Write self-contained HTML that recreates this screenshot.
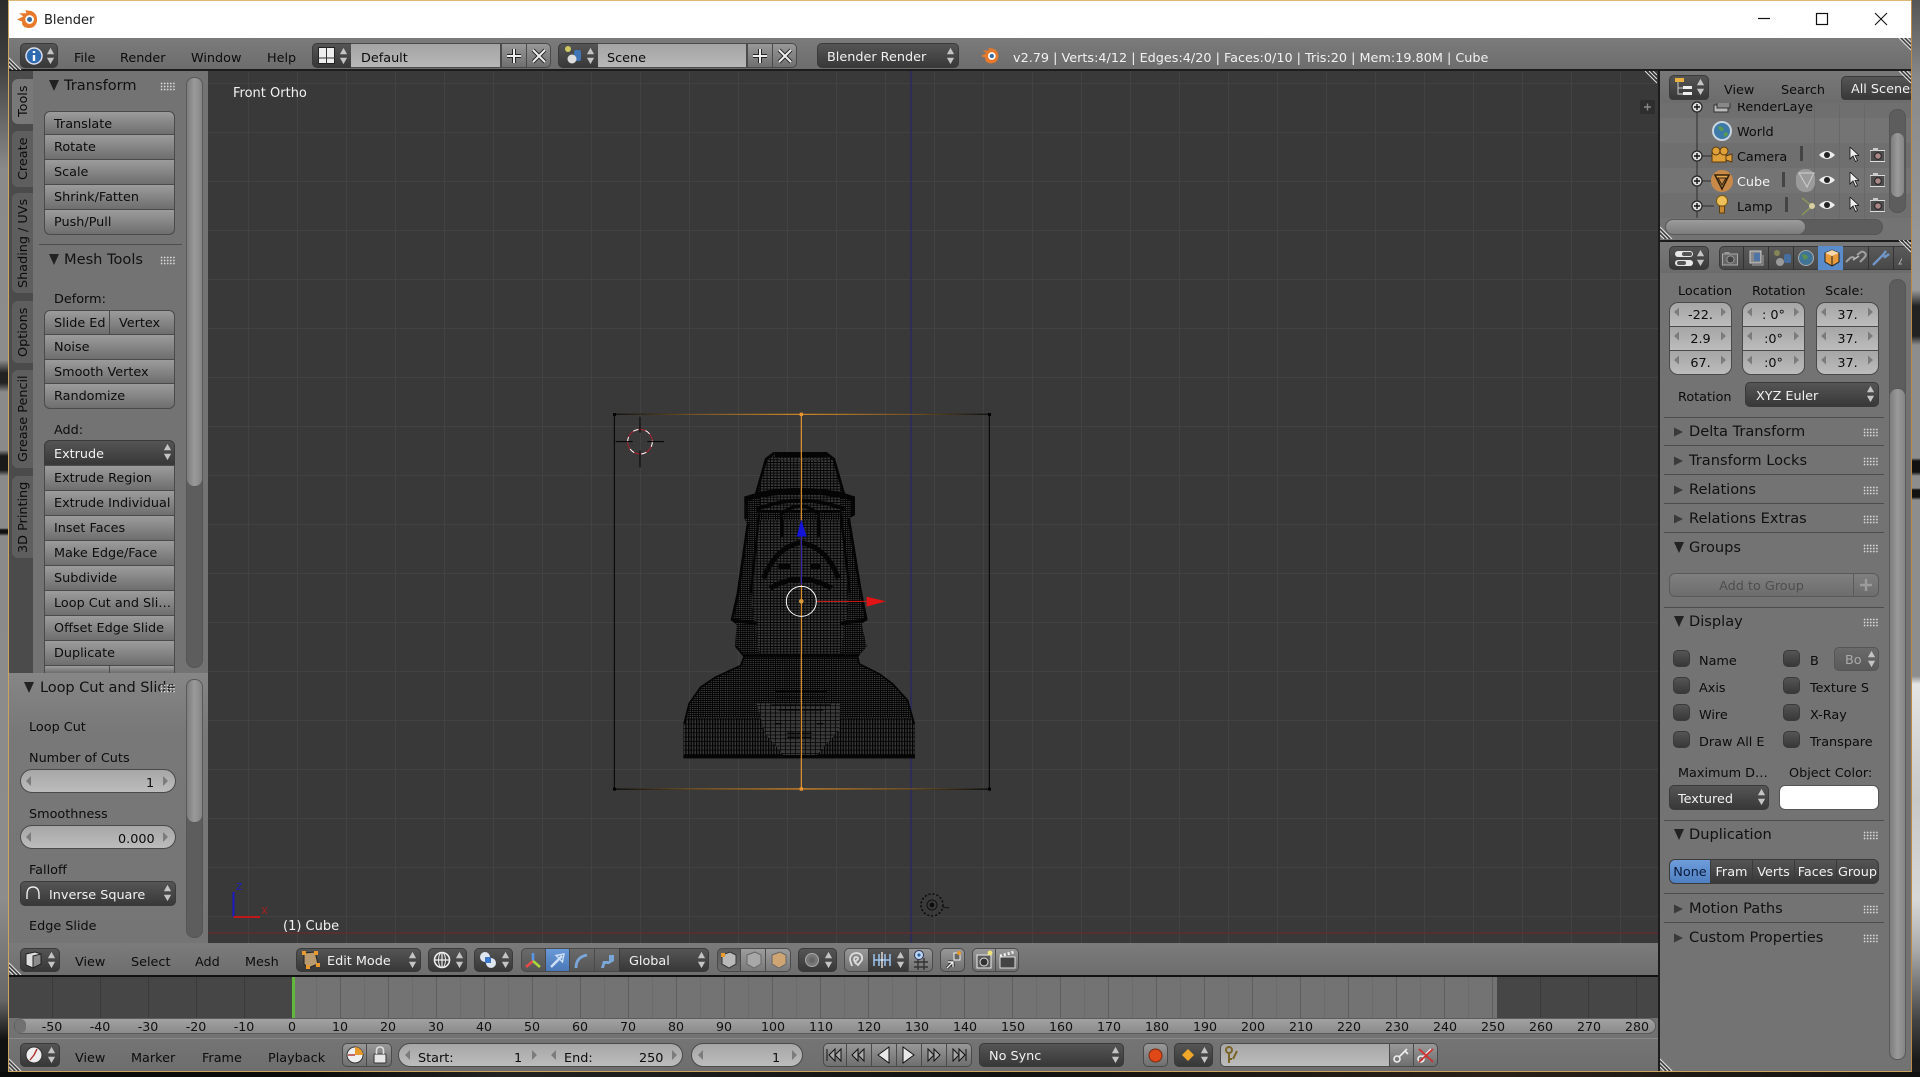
<!DOCTYPE html>
<html lang="en"><head><meta charset="utf-8"><title>Blender</title>
<style>
html,body{margin:0;padding:0;width:1920px;height:1077px;overflow:hidden;background:#111}
body{position:relative;font-family:"DejaVu Sans","Liberation Sans",sans-serif;font-size:12.8px;color:#0c0c0c}
div,svg{position:absolute;box-sizing:border-box}
.t{white-space:nowrap;line-height:16px;height:16px;margin-top:1.5px}
.w{color:#f2f2f2}
.h{font-size:14.6px;color:#111;line-height:18px;height:18px;white-space:nowrap}
.b{background:linear-gradient(#9c9c9c,#6e6e6e);border:1px solid #4a4a4a;margin-top:0;line-height:26px;padding-left:9px;white-space:nowrap;overflow:hidden}
.d{background:linear-gradient(#555,#383838);border:1px solid #3a3a3a;border-radius:5px;color:#f2f2f2;white-space:nowrap;line-height:27px}
.l{background:linear-gradient(#989898,#6f6f6f);border:1px solid #4a4a4a}
.f{background:linear-gradient(#a6a6a6,#bcbcbc);border:1px solid #4a4a4a}
.g{width:15px;height:9px;background:radial-gradient(circle,#dcdcdc .7px,rgba(0,0,0,0) 1px) 0 0/3.1px 3px}
.sep{height:1px;background:#4d4d4d}
.sb{background:#5d5d5d;border:1px solid #555;border-radius:8px}
.th{background:linear-gradient(90deg,#7d7d7d,#9a9a9a,#858585);border:1px solid #5a5a5a;border-radius:8px}
.tab{left:12px;width:21px;background:#5e5e5e;border-radius:6px 0 0 6px}
.tab span{position:absolute;left:3px;top:0;width:18px;height:100%;writing-mode:vertical-rl;transform:rotate(180deg);text-align:center;line-height:18px;white-space:nowrap;color:#0c0c0c;font-size:12.8px}
</style></head><body>
<svg width="0" height="0" style="left:0;top:0"><defs>
<symbol id="ud" viewBox="0 0 10 20"><path d="M5 1L9 8H1ZM5 19L9 12H1Z" fill="#c4c4c4"/></symbol>
<symbol id="ra" viewBox="0 0 6 10"><path d="M1 0L6 5L1 10Z" fill="#7c7c7c"/></symbol>
<symbol id="la" viewBox="0 0 6 10"><path d="M5 0L0 5L5 10Z" fill="#7c7c7c"/></symbol>
<symbol id="td" viewBox="0 0 10 11"><path d="M0 0H10L5 11Z" fill="#222"/></symbol>
<symbol id="tr" viewBox="0 0 10 10"><path d="M0 0L10 5L0 10Z" fill="#3a3a3a"/></symbol>
<symbol id="hc" viewBox="0 0 14 14"><path d="M0 2L12 14M0 6L8 14M0 10L4 14" stroke="#ddd" stroke-width="1.1" fill="none"/><path d="M0 4L10 14M0 8L6 14" stroke="#333" stroke-width="1" fill="none"/></symbol>
<symbol id="hr" viewBox="0 0 14 14"><path d="M2 0L14 12M6 0L14 8M10 0L14 4" stroke="#ddd" stroke-width="1.1" fill="none"/><path d="M4 0L14 10M8 0L14 6" stroke="#333" stroke-width="1" fill="none"/></symbol>
<symbol id="eye" viewBox="0 0 16 10"><path d="M0 5Q8 -3 16 5Q8 13 0 5Z" fill="#eee"/><circle cx="8" cy="5" r="3" fill="#222"/></symbol>
<symbol id="cur" viewBox="0 0 10 15"><path d="M1 0V12L4 9L6.5 14.5L8.5 13.5L6 8.5H10Z" fill="#eee" stroke="#111" stroke-width=".8"/></symbol>
<symbol id="cam" viewBox="0 0 15 14"><rect x="0" y="2.5" width="15" height="11" fill="#4d4d4d" stroke="#ddd" stroke-width="1"/><rect x="3" y="0" width="5" height="3" fill="#ccc"/><circle cx="8" cy="8" r="3.3" fill="#a88" stroke="#222"/></symbol>
<symbol id="pl" viewBox="0 0 14 14"><circle cx="7" cy="7" r="5" fill="#ddd" stroke="#222" stroke-width="1.2"/><path d="M4 7H10M7 4V10" stroke="#111" stroke-width="1.4"/></symbol>
<pattern id="m1" width="7" height="6" patternUnits="userSpaceOnUse"><rect width="7" height="6" fill="#3a3a3a"/><path d="M1 0V6M0 1H7" stroke="#000" stroke-width="3.2"/></pattern>
<pattern id="m2" width="10" height="8" patternUnits="userSpaceOnUse"><rect width="10" height="8" fill="#3a3a3a"/><path d="M1 0V8M0 1H10" stroke="#000" stroke-width="3"/></pattern>
<pattern id="m4" width="8" height="13" patternUnits="userSpaceOnUse"><rect width="8" height="13" fill="#363636"/><path d="M1.5 0V13" stroke="#000" stroke-width="4"/><path d="M0 1H8" stroke="#000" stroke-width="2.4"/></pattern>
<pattern id="m5" width="15" height="11" patternUnits="userSpaceOnUse"><rect width="15" height="11" fill="#3a3a3a"/><path d="M1 0V11M0 1H15" stroke="#000" stroke-width="2.2"/></pattern>
<linearGradient id="og" gradientUnits="userSpaceOnUse" x1="43" y1="0" x2="1168" y2="0"><stop offset="0" stop-color="#111"/><stop offset=".2" stop-color="#7a5a28"/><stop offset=".5" stop-color="#e8952e"/><stop offset=".8" stop-color="#7a5a28"/><stop offset="1" stop-color="#111"/></linearGradient>
<clipPath id="sil"><path d="M520 186L495 205L485 240L465 310L433 320L433 385L440 400L410 610L392 690L410 705L405 770L430 800L420 825L345 860L300 890L265 940L250 1000V1105H945V1000L925 930L880 880L840 850L780 820L775 800L800 770L785 700L803 690L785 600L750 385L765 375V320L735 310L712 230L705 205L680 186Z"/></clipPath>
</defs></svg>

<!-- desktop behind -->
<div style="left:0;top:0;width:9px;height:1077px;background:linear-gradient(#2b2b2b 0,#3d3d3d 60px,#8a8a8a 170px,#8c8c8c 360px,#222 373px,#222 383px,#8a8a8a 392px,#8a8a8a 450px,#1a1a1a 456px,#1a1a1a 470px,#8a8a8a 476px,#8a8a8a 528px,#111 530px,#111 533px,#8a8a8a 536px,#8c8c8c 900px,#666 1000px,#111 1040px)"></div>
<div style="left:1911px;top:0;width:9px;height:1077px;background:linear-gradient(#555 0,#8a8a8a 80px,#9a9a9a 290px,#222 306px,#222 336px,#8d8d8d 345px,#8d8d8d 458px,#111 461px,#111 472px,#8d8d8d 476px,#8d8d8d 488px,#111 490px,#111 497px,#8d8d8d 500px,#8d8d8d 676px,#e4e4e4 684px,#c8c8c8 800px,#d8d8d8 900px,#aaa 950px,#444 1020px,#1a1a1a 1060px)"></div>
<div style="left:0;top:1072px;width:1920px;height:5px;background:linear-gradient(90deg,#0a0a0a,#0a0a0a 300px,#222 500px,#111 1000px,#2a2018 1500px,#111)"></div>

<!-- window -->
<div style="left:8px;top:0;width:1904px;height:1072px;background:#727272;border:1px solid #c9a560;border-top:1px solid #d9b673"></div>
<div style="left:9px;top:1px;width:1902px;height:37px;background:#fff"></div>
<svg style="left:16px;top:8px" width="23" height="23" viewBox="0 0 22 22"><path d="M1 11L7 8L3 5L10 5L9 2L15 3Q21 6 20 13Q18 20 11 19Q5 18 6 13Z" fill="#e8792b"/><circle cx="13" cy="11" r="4.2" fill="#fff"/><circle cx="13" cy="11" r="2.4" fill="#3b6ea5"/></svg>
<div class="t" style="left:44px;top:11px;color:#1c1c1c;font-size:13px">Blender</div>
<svg style="left:1750px;top:8px" width="140" height="24"><path d="M8 10.5H20" stroke="#111" stroke-width="1.2"/><rect x="66.5" y="5.5" width="11" height="11" fill="none" stroke="#111" stroke-width="1.2"/><path d="M125 5L137 17M137 5L125 17" stroke="#111" stroke-width="1.1"/></svg>

<!-- top header -->
<div style="left:9px;top:38px;width:1902px;height:33px;background:linear-gradient(#7b7b7b,#6d6d6d);border-bottom:2px solid #1c1c1c"></div>
<svg style="left:9px;top:56px" width="14" height="14"><use href="#hc"/></svg>
<svg style="left:1897px;top:38px" width="14" height="14"><use href="#hr"/></svg>
<div class="d" style="left:20px;top:43px;width:38px;height:25px"></div>
<svg style="left:25px;top:47px" width="18" height="18" viewBox="0 0 18 18"><circle cx="9" cy="9" r="8" fill="#2e6ab0" stroke="#dde" stroke-width="1.5"/><path d="M9 4V6M9 8V14" stroke="#fff" stroke-width="2.4"/></svg>
<svg style="left:46px;top:47px" width="9" height="18"><use href="#ud"/></svg>
<div class="t" style="left:74px;top:49px">File</div>
<div class="t" style="left:120px;top:49px">Render</div>
<div class="t" style="left:191px;top:49px">Window</div>
<div class="t" style="left:267px;top:49px">Help</div>
<div class="d" style="left:312px;top:43px;width:42px;height:25px;border-radius:5px 0 0 5px"></div>
<svg style="left:318px;top:47px" width="17" height="17"><rect x=".5" y=".5" width="16" height="16" fill="#eee" stroke="#222"/><path d="M8.5 0V17M0 11H17" stroke="#333"/></svg>
<svg style="left:339px;top:47px" width="9" height="18"><use href="#ud"/></svg>
<div class="f" style="left:351px;top:43px;width:150px;height:25px;background:linear-gradient(#a4a4a4,#b7b7b7);border-left:0"></div>
<div class="t" style="left:361px;top:49px">Default</div>
<div class="l" style="left:501px;top:43px;width:26px;height:25px"></div>
<div class="l" style="left:526px;top:43px;width:25px;height:25px;border-radius:0 5px 5px 0"></div>
<svg style="left:505px;top:47px" width="44" height="18"><path d="M9 2V16M2 9H16" stroke="#222" stroke-width="4"/><path d="M9 2V16M2 9H16" stroke="#eee" stroke-width="2"/><path d="M28 3L40 15M40 3L28 15" stroke="#222" stroke-width="4"/><path d="M28 3L40 15M40 3L28 15" stroke="#eee" stroke-width="2"/></svg>
<div class="d" style="left:558px;top:43px;width:42px;height:25px;border-radius:5px 0 0 5px"></div>
<svg style="left:563px;top:45px" width="20" height="20"><circle cx="5" cy="4" r="3" fill="#cfc860"/><rect x="11" y="5" width="7" height="11" rx="2" fill="#3f74b5"/><circle cx="9" cy="14" r="4.5" fill="#ddd"/></svg>
<svg style="left:586px;top:47px" width="9" height="18"><use href="#ud"/></svg>
<div class="f" style="left:598px;top:43px;width:149px;height:25px;background:linear-gradient(#a4a4a4,#b7b7b7);border-left:0"></div>
<div class="t" style="left:607px;top:49px">Scene</div>
<div class="l" style="left:747px;top:43px;width:26px;height:25px"></div>
<div class="l" style="left:772px;top:43px;width:25px;height:25px;border-radius:0 5px 5px 0"></div>
<svg style="left:751px;top:47px" width="44" height="18"><path d="M9 2V16M2 9H16" stroke="#222" stroke-width="4"/><path d="M9 2V16M2 9H16" stroke="#eee" stroke-width="2"/><path d="M28 3L40 15M40 3L28 15" stroke="#222" stroke-width="4"/><path d="M28 3L40 15M40 3L28 15" stroke="#eee" stroke-width="2"/></svg>
<div class="d" style="left:817px;top:43px;width:142px;height:25px;padding-left:9px">Blender Render</div>
<svg style="left:946px;top:47px" width="9" height="18"><use href="#ud"/></svg>
<svg style="left:980px;top:46px" width="20" height="20" viewBox="0 0 22 22"><path d="M1 11L7 8L3 5L10 5L9 2L15 3Q21 6 20 13Q18 20 11 19Q5 18 6 13Z" fill="#e8792b"/><circle cx="13" cy="11" r="4.2" fill="#fff"/><circle cx="13" cy="11" r="2.4" fill="#3b6ea5"/></svg>
<div class="t w" style="left:1013px;top:49px">v2.79 | Verts:4/12 | Edges:4/20 | Faces:0/10 | Tris:20 | Mem:19.80M | Cube</div>

<!-- left tab strip + tools -->
<div style="left:9px;top:71px;width:24px;height:602px;background:#4b4b4b"></div>
<div class="tab" style="top:79px;height:45px;background:#787878"><span>Tools</span></div>
<div class="tab" style="top:131px;height:56px"><span>Create</span></div>
<div class="tab" style="top:193px;height:100px"><span>Shading / UVs</span></div>
<div class="tab" style="top:301px;height:62px"><span>Options</span></div>
<div class="tab" style="top:370px;height:98px"><span>Grease Pencil</span></div>
<div class="tab" style="top:476px;height:82px"><span>3D Printing</span></div>
<div style="left:33px;top:71px;width:175px;height:602px;background:#737373"></div>
<div class="sb" style="left:186px;top:77px;width:17px;height:591px"></div>
<div class="th" style="left:186px;top:77px;width:17px;height:410px"></div>

<svg style="left:49px;top:80px" width="10" height="11"><use href="#td"/></svg>
<div class="h" style="left:64px;top:77px">Transform</div>
<div class="g" style="left:160px;top:82px"></div>
<div class="b" style="left:44px;top:111px;width:131px;height:24px;border-radius:6px 6px 0 0">Translate</div>
<div class="b" style="left:44px;top:134px;width:131px;height:26px">Rotate</div>
<div class="b" style="left:44px;top:159px;width:131px;height:26px">Scale</div>
<div class="b" style="left:44px;top:184px;width:131px;height:26px">Shrink/Fatten</div>
<div class="b" style="left:44px;top:209px;width:131px;height:26px;border-radius:0 0 6px 6px">Push/Pull</div>
<div class="sep" style="left:39px;top:244px;width:143px"></div>
<svg style="left:49px;top:254px" width="10" height="11"><use href="#td"/></svg>
<div class="h" style="left:64px;top:251px">Mesh Tools</div>
<div class="g" style="left:160px;top:256px"></div>
<div class="t" style="left:54px;top:290px">Deform:</div>
<div class="b" style="left:44px;top:310px;width:66px;height:25px;border-radius:6px 0 0 0">Slide Ed</div>
<div class="b" style="left:109px;top:310px;width:66px;height:25px;border-radius:0 6px 0 0">Vertex</div>
<div class="b" style="left:44px;top:334px;width:131px;height:26px">Noise</div>
<div class="b" style="left:44px;top:359px;width:131px;height:25px">Smooth Vertex</div>
<div class="b" style="left:44px;top:383px;width:131px;height:26px;border-radius:0 0 6px 6px">Randomize</div>
<div class="t" style="left:54px;top:421px">Add:</div>
<div class="d" style="left:44px;top:440px;width:131px;height:25px;padding-left:9px;border-radius:6px 6px 0 0">Extrude</div>
<svg style="left:163px;top:443px" width="9" height="18"><use href="#ud"/></svg>
<div class="b" style="left:44px;top:465px;width:131px;height:26px">Extrude Region</div>
<div class="b" style="left:44px;top:490px;width:131px;height:26px">Extrude Individual</div>
<div class="b" style="left:44px;top:515px;width:131px;height:26px">Inset Faces</div>
<div class="b" style="left:44px;top:540px;width:131px;height:26px">Make Edge/Face</div>
<div class="b" style="left:44px;top:565px;width:131px;height:26px">Subdivide</div>
<div class="b" style="left:44px;top:590px;width:131px;height:26px">Loop Cut and Sli…</div>
<div class="b" style="left:44px;top:615px;width:131px;height:26px">Offset Edge Slide</div>
<div class="b" style="left:44px;top:640px;width:131px;height:26px">Duplicate</div>
<div class="b" style="left:44px;top:665px;width:66px;height:8px;border-bottom:0"></div>
<div class="b" style="left:109px;top:665px;width:66px;height:8px;border-bottom:0"></div>

<!-- operator panel -->
<div style="left:9px;top:673px;width:199px;height:270px;background:linear-gradient(#868686,#787878 60px,#757575)"></div>
<div class="sb" style="left:186px;top:679px;width:17px;height:259px"></div>
<div class="th" style="left:186px;top:679px;width:17px;height:144px"></div>
<svg style="left:24px;top:682px" width="10" height="11"><use href="#td"/></svg>
<div class="h" style="left:40px;top:679px;letter-spacing:-.1px">Loop Cut and Slide</div>
<div class="g" style="left:160px;top:684px"></div>
<div class="t" style="left:29px;top:718px">Loop Cut</div>
<div class="t" style="left:29px;top:749px">Number of Cuts</div>
<div class="f" style="left:20px;top:769px;width:156px;height:24px;border-radius:12px"></div>
<svg style="left:26px;top:776px" width="6" height="10"><use href="#la"/></svg>
<svg style="left:162px;top:776px" width="6" height="10"><use href="#ra"/></svg>
<div class="t" style="left:146px;top:774px">1</div>
<div class="t" style="left:29px;top:805px">Smoothness</div>
<div class="f" style="left:20px;top:825px;width:156px;height:24px;border-radius:12px"></div>
<svg style="left:26px;top:832px" width="6" height="10"><use href="#la"/></svg>
<svg style="left:162px;top:832px" width="6" height="10"><use href="#ra"/></svg>
<div class="t" style="left:118px;top:830px">0.000</div>
<div class="t" style="left:29px;top:861px">Falloff</div>
<div class="d" style="left:20px;top:881px;width:156px;height:25px;padding-left:28px">Inverse Square</div>
<svg style="left:25px;top:885px" width="16" height="16"><path d="M2 14V10Q2 2 8 2Q14 2 14 10V14" fill="none" stroke="#eee" stroke-width="1.4"/></svg>
<svg style="left:163px;top:884px" width="9" height="18"><use href="#ud"/></svg>
<div class="t" style="left:29px;top:917px">Edge Slide</div>

<!-- viewport -->
<div style="left:208px;top:71px;width:1451px;height:872px;background-color:#393939;background-image:linear-gradient(90deg,#424242 1px,rgba(0,0,0,0) 1px),linear-gradient(#424242 1px,rgba(0,0,0,0) 1px);background-size:49px 49px;background-position:40px 12px"></div>
<svg style="left:0;top:0" width="1920" height="1077">
<path d="M911 71V943" stroke="#26266e" stroke-width="1.2"/>
<path d="M208 933H1659" stroke="#6a2a2e" stroke-width="1.2"/>
<g transform="translate(600 390) scale(.33333)">
<rect x="43" y="73" width="1125" height="1125" fill="none" stroke="#000" stroke-width="3"/>
<path d="M43 73H1168M43 1197H1168" stroke="url(#og)" stroke-width="3.5"/>
<g clip-path="url(#sil)">
<rect x="240" y="180" width="720" height="930" fill="url(#m1)"/>
<rect x="480" y="190" width="240" height="170" fill="url(#m2)"/>
<path d="M478 390H725L745 640L720 800H480L455 640Z" fill="url(#m2)"/>
<rect x="240" y="985" width="720" height="125" fill="url(#m4)"/>
<path d="M470 940H720L718 1020L650 1095H550L495 1030Z" fill="url(#m5)"/>
<g fill="none" stroke="#050505">
<path d="M520 186L495 205L485 240L465 310M680 186L705 205L712 230L735 310" stroke-width="16"/>
<path d="M525 196H680" stroke-width="14"/>
<path d="M540 208H665" stroke="#3a3a3a" stroke-width="3" stroke-dasharray="7 4"/>
<path d="M433 325Q600 280 765 325" stroke-width="18"/>
<path d="M470 358Q600 305 735 358" stroke-width="11"/>
<path d="M433 320V385M765 320V378" stroke-width="24"/>
<path d="M470 365L725 365" stroke-width="7"/>
<path d="M545 440V372Q600 325 655 372V440" stroke-width="10"/>
<path d="M440 400L410 610L392 690" stroke-width="16"/>
<path d="M750 385L785 600L803 690" stroke-width="16"/>
<path d="M478 370L452 610M722 370L750 610" stroke-width="7"/>
<path d="M490 565Q530 470 600 458Q680 470 715 565" stroke-width="15"/>
<path d="M510 595Q600 540 695 595" stroke-width="15"/>
<path d="M535 530H570M630 530H660" stroke-width="16"/>
<path d="M395 690L470 700M720 700L800 690" stroke-width="10"/>
<path d="M430 797H780" stroke-width="12"/>
<path d="M405 770L430 800L420 825L345 860L300 890L265 940L250 1000M775 800L780 820L840 850L880 880L925 930L945 1000" stroke-width="10"/>
<path d="M525 905H680M525 925H680M515 945H690M535 960H670" stroke-width="4"/>
<path d="M525 1001H545M650 1001H670M562 1030H635M562 1042H635" stroke-width="4"/>
<path d="M250 1100H945" stroke-width="10"/>
</g>
</g>
<path d="M604 73V1197" stroke="#e8952e" stroke-width="3.5"/>
<path d="M604 585V435" stroke="#1414c8" stroke-width="3"/><path d="M604 388L620 440H590Z" fill="#1414d8"/>
<path d="M650 634H800" stroke="#d81a1a" stroke-width="3"/><path d="M858 634L800 620V650Z" fill="#e01414"/>
<circle cx="604" cy="634" r="45" fill="none" stroke="#fff" stroke-width="3"/>
<circle cx="604" cy="634" r="7" fill="#d89a3c"/>
<rect x="39" y="69" width="9" height="9" fill="#000"/><rect x="1164" y="69" width="9" height="9" fill="#000"/><rect x="39" y="1193" width="9" height="9" fill="#000"/><rect x="1164" y="1193" width="9" height="9" fill="#000"/><rect x="599" y="68" width="10" height="10" fill="#e8952e"/><rect x="599" y="1192" width="10" height="10" fill="#e8952e"/>
<circle cx="120" cy="155" r="37" fill="none" stroke="#b02030" stroke-width="3"/>
<circle cx="120" cy="155" r="37" fill="none" stroke="#fff" stroke-width="3" stroke-dasharray="16 22"/>
<path d="M120 80V128M120 182V232M47 155H98M142 155H192" stroke="#000" stroke-width="3"/>
</g>
<!-- mini axis -->
<path d="M233.5 917V892" stroke="#1a1ac0" stroke-width="2"/><path d="M233.5 917H260" stroke="#c01818" stroke-width="2"/>
<text x="236" y="890" font-size="12" font-family="DejaVu Sans,sans-serif" fill="#2020b0">z</text>
<text x="261" y="914" font-size="12" font-family="DejaVu Sans,sans-serif" fill="#9e2020">x</text>
<!-- lamp -->
<g transform="translate(932 905)"><circle r="11" fill="none" stroke="#0c0c0c" stroke-width="1.6" stroke-dasharray="2 2"/><circle r="5" fill="none" stroke="#111"/><circle r="2.4" fill="#0c0c0c"/><path d="M11 2L17 3" stroke="#111"/></g>
</svg>
<div class="t w" style="left:233px;top:84px;font-size:13px">Front Ortho</div>
<div class="t w" style="left:283px;top:917px;font-size:13px">(1) Cube</div>
<svg style="left:1643px;top:71px" width="14" height="14"><use href="#hr"/></svg>
<div style="left:1640px;top:100px;width:15px;height:14px;background:#2e2e2e;border-radius:2px"></div>
<svg style="left:1640px;top:100px" width="15" height="14"><path d="M7.5 3.5V10.5M4 7H11" stroke="#888" stroke-width="1.4"/></svg>

<!-- 3D view header -->
<div style="left:9px;top:943px;width:1650px;height:34px;background:linear-gradient(#7b7b7b,#6e6e6e);border-bottom:2px solid #111"></div>
<svg style="left:9px;top:961px" width="14" height="14"><use href="#hc"/></svg>
<div class="d" style="left:20px;top:948px;width:40px;height:24px"></div>
<svg style="left:25px;top:951px" width="17" height="18"><path d="M1 3L10 1L16 3V13L8 17L1 14Z" fill="#ddd" stroke="#222"/><path d="M8 5L16 3V13L8 17Z" fill="#8a8a8a" stroke="#222"/></svg>
<svg style="left:47px;top:951px" width="9" height="18"><use href="#ud"/></svg>
<div class="t" style="left:75px;top:953px">View</div>
<div class="t" style="left:131px;top:953px">Select</div>
<div class="t" style="left:195px;top:953px">Add</div>
<div class="t" style="left:245px;top:953px">Mesh</div>
<div class="d" style="left:296px;top:948px;width:125px;height:24px;padding-left:30px;line-height:26px">Edit Mode</div>
<svg style="left:301px;top:950px" width="20" height="20"><path d="M3 3L14 2L17 14L7 18L3 14Z" fill="#b89a70" stroke="#222"/><rect x="1" y="1" width="4" height="4" fill="#e89a2c"/><rect x="13" y="1" width="4" height="4" fill="#e89a2c"/><rect x="15" y="13" width="4" height="4" fill="#e89a2c"/><rect x="5" y="15" width="4" height="4" fill="#e89a2c"/></svg>
<svg style="left:408px;top:951px" width="9" height="18"><use href="#ud"/></svg>
<div class="d" style="left:428px;top:948px;width:39px;height:24px"></div>
<svg style="left:433px;top:951px" width="18" height="18"><circle cx="9" cy="9" r="7.5" fill="none" stroke="#eee" stroke-width="1.6"/><path d="M1 9H17M9 1V17" stroke="#eee" stroke-width="1.2"/><ellipse cx="9" cy="9" rx="3.5" ry="7.5" fill="none" stroke="#eee"/></svg>
<svg style="left:455px;top:951px" width="9" height="18"><use href="#ud"/></svg>
<div class="d" style="left:474px;top:948px;width:39px;height:24px"></div>
<svg style="left:479px;top:951px" width="18" height="18"><circle cx="6" cy="6" r="5" fill="#dfe6ef"/><circle cx="12" cy="12" r="5" fill="#dfe6ef"/><rect x="6" y="6" width="6" height="6" fill="#3c78c8"/></svg>
<svg style="left:501px;top:951px" width="9" height="18"><use href="#ud"/></svg>
<div class="l" style="left:521px;top:948px;width:25px;height:24px;border-radius:5px 0 0 5px;background:linear-gradient(#6a6a6a,#565656)"></div>
<svg style="left:523px;top:950px" width="20" height="20"><path d="M10 3V11" stroke="#5a96e8" stroke-width="2.6"/><path d="M10 11L3 17" stroke="#e84a4a" stroke-width="2.6"/><path d="M10 11L17 17" stroke="#aad83a" stroke-width="2.6"/></svg>
<div class="l" style="left:545px;top:948px;width:25px;height:24px;background:linear-gradient(#6a9ad8,#4a78b8)"></div>
<svg style="left:549px;top:952px" width="17" height="17"><path d="M2 15L13 4" stroke="#cfe0f6" stroke-width="2.4"/><path d="M15 2L7 3.5L13.5 10Z" fill="none" stroke="#cfe0f6" stroke-width="1.4"/></svg>
<div class="l" style="left:569px;top:948px;width:26px;height:24px;background:linear-gradient(#6a6a6a,#565656)"></div>
<svg style="left:573px;top:952px" width="17" height="17"><path d="M3 16Q3 5 14 3" fill="none" stroke="#7aa6d8" stroke-width="2.8"/></svg>
<div class="l" style="left:594px;top:948px;width:26px;height:24px;background:linear-gradient(#6a6a6a,#565656)"></div>
<svg style="left:598px;top:952px" width="17" height="17"><path d="M3 16L5 9L11 9V3H16V9L11 12H7L6 16Z" fill="#7aa6d8"/></svg>
<div class="d" style="left:619px;top:948px;width:90px;height:24px;border-radius:0 5px 5px 0;padding-left:9px;line-height:26px">Global</div>
<svg style="left:697px;top:951px" width="9" height="18"><use href="#ud"/></svg>
<div class="l" style="left:717px;top:948px;width:24px;height:24px;border-radius:5px 0 0 5px;background:linear-gradient(#5c5c5c,#6c6c6c)"></div>
<div class="l" style="left:740px;top:948px;width:26px;height:24px;background:linear-gradient(#9d9d9d,#7a7a7a)"></div>
<div class="l" style="left:765px;top:948px;width:26px;height:24px;border-radius:0 5px 5px 0;background:linear-gradient(#9d9d9d,#7a7a7a)"></div>
<svg style="left:720px;top:951px" width="68" height="18"><path d="M2 4L10 1L16 4V13L9 17L2 13Z" fill="#b9b9b9" stroke="#333"/><rect x="1" y="2" width="4" height="4" fill="#e89a2c"/><path d="M27 4L35 1L41 4V13L34 17L27 13Z" fill="#a8a8a8" stroke="#666"/><path d="M52 4L60 1L66 4V13L59 17L52 13Z" fill="#cfa574" stroke="#666"/></svg>
<div class="d" style="left:798px;top:948px;width:39px;height:24px"></div>
<svg style="left:804px;top:952px" width="16" height="16"><circle cx="8" cy="8" r="6.5" fill="#777" stroke="#aaa"/><circle cx="8" cy="8" r="3" fill="#666"/></svg>
<svg style="left:824px;top:951px" width="9" height="18"><use href="#ud"/></svg>
<div class="l" style="left:844px;top:948px;width:25px;height:24px;border-radius:5px 0 0 5px"></div>
<svg style="left:847px;top:951px" width="18" height="18"><path d="M5 15L3 9Q3 2 10 2Q16 3 15 9L11 14L8 11L11 8Q11 6 9 6Q7 6 7 9L9 13" fill="none" stroke="#dcdcdc" stroke-width="1.8"/></svg>
<div class="d" style="left:868px;top:948px;width:41px;height:24px;border-radius:0"></div>
<svg style="left:872px;top:951px" width="34" height="18"><path d="M2 3V15M7 3V15M13 3V15M18 3V15M2 9H18" stroke="#9cc4ee" stroke-width="1.5"/><path d="M10 1V17" stroke="#fff" stroke-width="1.2"/></svg>
<svg style="left:896px;top:951px" width="9" height="18"><use href="#ud"/></svg>
<div class="l" style="left:908px;top:948px;width:25px;height:24px;border-radius:0 5px 5px 0"></div>
<svg style="left:910px;top:949px" width="20" height="22"><path d="M4 13H18M4 18H18M8 9V21M14 9V21" stroke="#333" stroke-width="1.4"/><circle cx="9" cy="6" r="4.5" fill="#bcd8f2" stroke="#335"/><circle cx="9" cy="6" r="1.6" fill="#3060a0"/></svg>
<div class="l" style="left:940px;top:948px;width:25px;height:24px;border-radius:5px"></div>
<svg style="left:943px;top:950px" width="20" height="20"><path d="M4 18L10 12M10 12H5M10 12V17" stroke="#222" stroke-width="3"/><path d="M4 18L10 12M10 12H5M10 12V17" stroke="#eee" stroke-width="1.4"/><rect x="11" y="3" width="6" height="7" fill="#666" stroke="#eee"/><circle cx="16" cy="3" r="2" fill="#e89a2c"/></svg>
<div class="l" style="left:972px;top:948px;width:24px;height:24px;border-radius:5px 0 0 5px"></div>
<div class="l" style="left:995px;top:948px;width:24px;height:24px;border-radius:0 5px 5px 0"></div>
<svg style="left:976px;top:950px" width="17" height="19"><rect x="1" y="5" width="14" height="13" fill="#5a5a5a" stroke="#eee"/><circle cx="8" cy="12" r="4" fill="#333" stroke="#ddd"/><circle cx="14" cy="3" r="2.4" fill="#f2e27a"/></svg>
<svg style="left:999px;top:950px" width="17" height="19"><rect x="1" y="7" width="15" height="11" fill="#444" stroke="#ddd"/><path d="M1 6L15 2" stroke="#eee" stroke-width="3" stroke-dasharray="2 2"/></svg>

<!-- timeline -->
<div style="left:9px;top:977px;width:283px;height:41px;background:#464646;background-image:linear-gradient(90deg,#3a3a3a 1px,rgba(0,0,0,0) 1px);background-size:48px 100%;background-position:43px 0"></div>
<div style="left:292px;top:977px;width:1205px;height:41px;background-color:#737373;background-image:linear-gradient(90deg,#5f5f5f 1px,rgba(0,0,0,0) 1px),linear-gradient(90deg,#6c6c6c 1px,rgba(0,0,0,0) 1px);background-size:48px 100%,24px 100%;background-position:0 0,0 0"></div>
<div style="left:1497px;top:977px;width:162px;height:41px;background:#464646;background-image:linear-gradient(90deg,#3a3a3a 1px,rgba(0,0,0,0) 1px);background-size:48px 100%;background-position:43px 0"></div>
<div style="left:292px;top:977px;width:3px;height:41px;background:#62b83c"></div>
<div style="left:9px;top:1018px;width:1650px;height:21px;background:#727272"></div>
<div style="left:14px;top:1018px;width:1642px;height:16px;border-radius:8px;background:linear-gradient(#a2a2a2,#8a8a8a);border:1px solid #5c5c5c"></div>
<div style="left:15px;top:1019px;width:11px;height:14px;border-radius:7px;background:#717171"></div>
<svg style="left:0;top:1016px" width="1660" height="20" font-family="DejaVu Sans,sans-serif" font-size="12.6" fill="#111" text-anchor="middle">
<text x="52" y="15">-50</text><text x="100" y="15">-40</text><text x="148" y="15">-30</text><text x="196" y="15">-20</text><text x="244" y="15">-10</text><text x="292" y="15">0</text><text x="340" y="15">10</text><text x="388" y="15">20</text><text x="436" y="15">30</text><text x="484" y="15">40</text><text x="532" y="15">50</text><text x="580" y="15">60</text><text x="628" y="15">70</text><text x="676" y="15">80</text><text x="724" y="15">90</text><text x="773" y="15">100</text><text x="821" y="15">110</text><text x="869" y="15">120</text><text x="917" y="15">130</text><text x="965" y="15">140</text><text x="1013" y="15">150</text><text x="1061" y="15">160</text><text x="1109" y="15">170</text><text x="1157" y="15">180</text><text x="1205" y="15">190</text><text x="1253" y="15">200</text><text x="1301" y="15">210</text><text x="1349" y="15">220</text><text x="1397" y="15">230</text><text x="1445" y="15">240</text><text x="1493" y="15">250</text><text x="1541" y="15">260</text><text x="1589" y="15">270</text><text x="1637" y="15">280</text>
</svg>
<div style="left:9px;top:1038px;width:1650px;height:1px;background:#8a8a8a"></div>
<div style="left:9px;top:1039px;width:1650px;height:32px;background:linear-gradient(#747474,#6e6e6e)"></div>
<svg style="left:9px;top:1057px" width="14" height="14"><use href="#hc"/></svg>
<div class="d" style="left:20px;top:1043px;width:40px;height:24px"></div>
<svg style="left:25px;top:1046px" width="18" height="18"><circle cx="9" cy="9" r="8" fill="#eee" stroke="#333"/><path d="M9 9L5 14M9 9L12 3" stroke="#b03030" stroke-width="1.4"/></svg>
<svg style="left:47px;top:1046px" width="9" height="18"><use href="#ud"/></svg>
<div class="t" style="left:75px;top:1049px">View</div>
<div class="t" style="left:131px;top:1049px">Marker</div>
<div class="t" style="left:202px;top:1049px">Frame</div>
<div class="t" style="left:268px;top:1049px">Playback</div>
<div class="l" style="left:342px;top:1043px;width:25px;height:24px;border-radius:5px 0 0 5px"></div>
<div class="l" style="left:366px;top:1043px;width:26px;height:24px;border-radius:0 5px 5px 0"></div>
<svg style="left:346px;top:1046px" width="18" height="18"><circle cx="9" cy="9" r="8" fill="#eee" stroke="#333"/><path d="M9 9V1A8 8 0 0 1 17 9Z" fill="#e89a2c"/><path d="M9 9H2" stroke="#b03030" stroke-width="1.4"/></svg>
<svg style="left:372px;top:1046px" width="16" height="18"><rect x="2" y="8" width="12" height="9" rx="1" fill="#e6e6e6" stroke="#333"/><path d="M4.5 8V4.5Q4.5 1 8 1Q11.5 1 11.5 4.5V8" fill="none" stroke="#ddd" stroke-width="1.6"/></svg>
<div class="f" style="left:398px;top:1043px;width:147px;height:24px;border-radius:12px 0 0 12px"></div>
<svg style="left:405px;top:1050px" width="6" height="10"><use href="#la"/></svg>
<svg style="left:531px;top:1050px" width="6" height="10"><use href="#ra"/></svg>
<div class="t" style="left:418px;top:1049px">Start:</div>
<div class="t" style="left:514px;top:1049px">1</div>
<div class="f" style="left:544px;top:1043px;width:139px;height:24px;border-radius:0 12px 12px 0;border-left:0"></div>
<svg style="left:551px;top:1050px" width="6" height="10"><use href="#la"/></svg>
<svg style="left:671px;top:1050px" width="6" height="10"><use href="#ra"/></svg>
<div class="t" style="left:564px;top:1049px">End:</div>
<div class="t" style="left:639px;top:1049px">250</div>
<div class="f" style="left:691px;top:1043px;width:112px;height:24px;border-radius:12px"></div>
<svg style="left:698px;top:1050px" width="6" height="10"><use href="#la"/></svg>
<svg style="left:791px;top:1050px" width="6" height="10"><use href="#ra"/></svg>
<div class="t" style="left:772px;top:1049px">1</div>
<div class="l" style="left:823px;top:1043px;width:24px;height:24px;border-radius:5px 0 0 5px"></div>
<div class="l" style="left:846px;top:1043px;width:26px;height:24px"></div>
<div class="l" style="left:871px;top:1043px;width:26px;height:24px"></div>
<div class="l" style="left:896px;top:1043px;width:26px;height:24px"></div>
<div class="l" style="left:921px;top:1043px;width:26px;height:24px"></div>
<div class="l" style="left:946px;top:1043px;width:26px;height:24px;border-radius:0 5px 5px 0"></div>
<svg style="left:823px;top:1043px" width="150" height="24" fill="#aaa" stroke="#111" stroke-width="1"><path d="M4 6V18M12 6L6 12L12 18ZM18 6L12 12L18 18Z"/><path d="M35 6L29 12L35 18ZM41 6L35 12L41 18Z"/><path d="M66 4L55 12L66 20Z" fill="#e8e8e8"/><path d="M80 4L91 12L80 20Z" fill="#e8e8e8"/><path d="M105 6L111 12L105 18ZM111 6L117 12L111 18Z"/><path d="M130 6L136 12L130 18ZM136 6L142 12L136 18ZM143 6V18"/></svg>
<div class="d" style="left:979px;top:1043px;width:145px;height:24px;padding-left:9px;line-height:26px">No Sync</div>
<svg style="left:1111px;top:1046px" width="9" height="18"><use href="#ud"/></svg>
<div class="l" style="left:1143px;top:1043px;width:25px;height:24px;border-radius:5px"></div>
<svg style="left:1147px;top:1047px" width="17" height="17"><circle cx="8.5" cy="8.5" r="6.5" fill="#e04818" stroke="#7a2a10"/></svg>
<div class="d" style="left:1174px;top:1043px;width:39px;height:24px"></div>
<svg style="left:1181px;top:1048px" width="14" height="14"><path d="M7 1L13 7L7 13L1 7Z" fill="#f0a828"/></svg>
<svg style="left:1200px;top:1046px" width="9" height="18"><use href="#ud"/></svg>
<div class="f" style="left:1220px;top:1043px;width:170px;height:24px;border-radius:5px 0 0 5px"></div>
<svg style="left:1224px;top:1045px" width="20" height="20"><circle cx="5" cy="5" r="3" fill="none" stroke="#7a6428" stroke-width="2"/><path d="M5 8V18M5 14H8M13 6L9 14" stroke="#7a6428" stroke-width="2"/></svg>
<div class="l" style="left:1389px;top:1043px;width:25px;height:24px"></div>
<div class="l" style="left:1413px;top:1043px;width:25px;height:24px;border-radius:0 5px 5px 0"></div>
<svg style="left:1392px;top:1046px" width="44" height="18"><circle cx="5" cy="13" r="3" fill="none" stroke="#eee" stroke-width="1.6"/><path d="M7 11L15 3M13 5L16 8" stroke="#eee" stroke-width="1.6"/><circle cx="29" cy="13" r="3" fill="none" stroke="#eee" stroke-width="1.6"/><path d="M31 11L39 3" stroke="#eee" stroke-width="1.6"/><path d="M27 3L41 16M41 3L27 16" stroke="#d03030" stroke-width="1.8"/></svg>

<!-- right column -->
<div style="left:1658px;top:71px;width:2px;height:1000px;background:#1c1c1c"></div>
<div style="left:1660px;top:71px;width:251px;height:32px;background:linear-gradient(#787878,#6c6c6c)"></div>
<div class="d" style="left:1669px;top:75px;width:40px;height:25px"></div>
<svg style="left:1674px;top:77px" width="20" height="20"><rect x="1" y="1" width="9" height="4" fill="#e8b040"/><path d="M4 5V17H9M4 11H9" stroke="#ccc" fill="none"/><rect x="9" y="9" width="9" height="3" fill="#eee"/><rect x="9" y="15" width="9" height="3" fill="#eee"/></svg>
<svg style="left:1696px;top:78px" width="9" height="18"><use href="#ud"/></svg>
<div class="t" style="left:1724px;top:81px">View</div>
<div class="t" style="left:1781px;top:81px">Search</div>
<div class="d" style="left:1841px;top:76px;width:70px;height:24px;border-radius:5px 0 0 5px;padding-left:9px;overflow:hidden;border-right:0;line-height:26px">All Scenes</div>
<svg style="left:1897px;top:71px" width="14" height="14"><use href="#hr"/></svg>

<div style="left:1660px;top:103px;width:251px;height:15px;background:#6f6f6f"></div>
<div style="left:1660px;top:118px;width:251px;height:25px;background:#747474"></div>
<div style="left:1660px;top:143px;width:251px;height:25px;background:#6f6f6f"></div>
<div style="left:1660px;top:168px;width:251px;height:25px;background:#747474"></div>
<div style="left:1660px;top:193px;width:251px;height:25px;background:#6f6f6f"></div>
<div style="left:1660px;top:218px;width:251px;height:22px;background:#737373"></div>
<div style="left:1814px;top:103px;width:1px;height:115px;background:#686868"></div>
<div style="left:1839px;top:103px;width:1px;height:115px;background:#686868"></div>
<div style="left:1864px;top:103px;width:1px;height:115px;background:#686868"></div>
<svg style="left:1660px;top:103px" width="230" height="120">
<path d="M37 0V115M37 53H54M37 78H54M37 103H54" stroke="#2e2e2e"/>
<circle cx="62" cy="78" r="11" fill="#c98a48"/>
<path d="M54 2H68V9H54Z" fill="#bbb" stroke="#333"/><path d="M57 0V5H70V0" fill="#888" stroke="#333"/>
<circle cx="62" cy="28" r="9" fill="#3d7aa8" stroke="#c8d4e0" stroke-width="2"/><path d="M58 24Q62 22 64 27Q60 30 58 24ZM64 30Q68 28 68 32L64 34Z" fill="#5a9a50"/>
<path d="M52 50H66V59H52Z" fill="#e0a038" stroke="#5a3a10"/><circle cx="56" cy="48" r="4" fill="#e0a038" stroke="#5a3a10"/><circle cx="64" cy="48" r="4" fill="#e0a038" stroke="#5a3a10"/><path d="M66 53L72 51V59L66 57Z" fill="#e0a038" stroke="#5a3a10"/>
<path d="M55 72H69L62 86Z" fill="#e8a850" stroke="#33220c" stroke-width="1.6"/><path d="M58 75H66L62 82Z" fill="#c98a48" stroke="#33220c"/>
<circle cx="62" cy="98" r="5.5" fill="#eec05a" stroke="#7a5a10"/><rect x="59.5" y="103" width="5" height="7" fill="#c88a30" stroke="#5a4010"/>
<rect x="136" y="66" width="19" height="23" rx="9" fill="#9a9a9a"/><path d="M139 70H154L147 84Z" fill="none" stroke="#c8c8c8" stroke-width="1.2"/>
<path d="M142 95L152 103L142 112" fill="none" stroke="#8a9a5a" stroke-width="1.4"/><circle cx="152" cy="103" r="3" fill="#d8d0a0"/>
</svg>
<div style="left:1800px;top:146px;width:3px;height:15px;background:#444"></div>
<div style="left:1782px;top:172px;width:3px;height:15px;background:#444"></div>
<div style="left:1785px;top:197px;width:3px;height:15px;background:#444"></div>
<div class="t" style="left:1737px;top:98px;width:76px;overflow:hidden">RenderLayers</div>
<div style="left:1660px;top:95px;width:251px;height:8px;background:transparent"></div>
<div class="t" style="left:1737px;top:123px">World</div>
<div class="t" style="left:1737px;top:148px">Camera</div>
<div class="t" style="left:1737px;top:173px;color:#f4f4f4">Cube</div>
<div class="t" style="left:1737px;top:198px">Lamp</div>
<svg style="left:1819px;top:150px" width="16" height="10"><use href="#eye"/></svg>
<svg style="left:1819px;top:175px" width="16" height="10"><use href="#eye"/></svg>
<svg style="left:1819px;top:200px" width="16" height="10"><use href="#eye"/></svg>
<svg style="left:1849px;top:147px" width="10" height="15"><use href="#cur"/></svg>
<svg style="left:1849px;top:172px" width="10" height="15"><use href="#cur"/></svg>
<svg style="left:1849px;top:197px" width="10" height="15"><use href="#cur"/></svg>
<svg style="left:1870px;top:148px" width="15" height="14"><use href="#cam"/></svg>
<svg style="left:1870px;top:173px" width="15" height="14"><use href="#cam"/></svg>
<svg style="left:1870px;top:198px" width="15" height="14"><use href="#cam"/></svg>
<svg style="left:1690px;top:149px" width="14" height="14"><use href="#pl"/></svg>
<svg style="left:1690px;top:174px" width="14" height="14"><use href="#pl"/></svg>
<svg style="left:1690px;top:199px" width="14" height="14"><use href="#pl"/></svg>
<div style="left:1660px;top:71px;width:251px;height:32px;background:linear-gradient(#787878,#6c6c6c);clip-path:inset(25px 0 0 0)"></div>
<div class="d" style="left:1669px;top:75px;width:40px;height:25px;background:none;border:0"></div>
<svg style="left:1690px;top:100px" width="14" height="14" ><use href="#pl"/></svg>
<div class="d" style="left:1669px;top:96px;width:40px;height:4px;border-radius:0 0 5px 5px;border-top:0;background:#3a3a3a"></div>
<div class="d" style="left:1841px;top:96px;width:70px;height:4px;border-radius:0 0 0 5px;border-top:0;border-right:0;background:#3a3a3a"></div>
<div class="sb" style="left:1889px;top:109px;width:17px;height:104px"></div>
<div class="th" style="left:1890px;top:132px;width:15px;height:66px"></div>
<div class="sb" style="left:1665px;top:219px;width:218px;height:16px;border-radius:8px"></div>
<div style="left:1665px;top:219px;width:141px;height:16px;border-radius:8px;background:linear-gradient(#9c9c9c,#7c7c7c);border:1px solid #5a5a5a"></div>
<svg style="left:1660px;top:225px" width="14" height="14"><use href="#hc"/></svg>

<div style="left:1660px;top:240px;width:251px;height:2px;background:#1c1c1c"></div>
<div style="left:1660px;top:242px;width:251px;height:31px;background:linear-gradient(#787878,#6c6c6c)"></div>
<div style="left:1660px;top:273px;width:251px;height:798px;background:#737373"></div>
<div class="d" style="left:1669px;top:246px;width:40px;height:24px"></div>
<svg style="left:1674px;top:249px" width="20" height="18"><rect x="1" y="2" width="18" height="6" rx="3" fill="#e8e8e8"/><rect x="1" y="11" width="18" height="6" rx="3" fill="#e8e8e8"/><rect x="8" y="3" width="10" height="4" rx="2" fill="#555"/><rect x="3" y="12" width="9" height="4" rx="2" fill="#555"/></svg>
<svg style="left:1696px;top:249px" width="9" height="18"><use href="#ud"/></svg>
<div style="left:1719px;top:246px;width:192px;height:24px;background:linear-gradient(#5a5a5a,#484848);border:1px solid #3a3a3a;border-radius:5px 0 0 5px;border-right:0"></div>
<div style="left:1743px;top:246px;width:1px;height:24px;background:#333"></div>
<div style="left:1768px;top:246px;width:1px;height:24px;background:#333"></div>
<div style="left:1793px;top:246px;width:1px;height:24px;background:#333"></div>
<div style="left:1818px;top:246px;width:25px;height:24px;background:#5a8ccc"></div>
<div style="left:1868px;top:246px;width:1px;height:24px;background:#333"></div>
<div style="left:1893px;top:246px;width:1px;height:24px;background:#333"></div>
<svg style="left:1722px;top:249px" width="180" height="18">
<g transform="translate(-2.5 0)"><rect x="3" y="5" width="15" height="11" fill="#666" stroke="#aaa"/><circle cx="11" cy="10.5" r="3.6" fill="#444" stroke="#999"/><rect x="5" y="3" width="5" height="2" fill="#999"/></g>
<rect x="28" y="2" width="11" height="12" fill="#888" stroke="#ccc"/><rect x="32" y="4" width="6" height="8" fill="#4f74a8"/><path d="M41 6V16H30" stroke="#aaa" fill="none"/>
<circle cx="55" cy="4" r="3" fill="#9a9a5a" opacity=".7"/><rect x="62" y="5" width="7" height="9" rx="2" fill="#466e9e"/><circle cx="58" cy="13" r="4" fill="#9a9a9a"/>
<g transform="translate(-2 0)"><circle cx="86" cy="9" r="7.5" fill="#3f7496" stroke="#aaa"/><path d="M82 6Q87 4 88 9L84 11Z" fill="#5a9050"/></g>
<g transform="translate(-8 0)"><path d="M111 4L118 1L125 4V13L118 17L111 13Z" fill="#e89a3c" stroke="#222"/><path d="M111 4L118 7L125 4L118 1Z" fill="#f6d8a8"/><path d="M118 7V17" stroke="#222"/></g>
<g transform="translate(-9 0)"><path d="M133 13L137 9Q140 7 142 10M144 6L148 3Q150 2 152 4Q154 6 151 9L147 13" fill="none" stroke="#a0a0a0" stroke-width="2"/><path d="M140 11L146 7" stroke="#bbb" stroke-width="1.6"/></g>
<g transform="translate(-7 0)"><path d="M158 16L168 6M171 2L168 6L170 8L174 5" fill="none" stroke="#6f96c6" stroke-width="2.4"/></g>
<path d="M177 15L183 4L189 15Z" fill="none" stroke="#aaa"/>
</svg>
<svg style="left:1897px;top:240px" width="14" height="14"><use href="#hr"/></svg>

<div class="sb" style="left:1889px;top:279px;width:17px;height:781px"></div>
<div class="th" style="left:1889px;top:388px;width:17px;height:672px"></div>

<div class="t" style="left:1678px;top:282px">Location</div>
<div class="t" style="left:1752px;top:282px">Rotation</div>
<div class="t" style="left:1825px;top:282px">Scale:</div>
<div class="f" style="left:1669px;top:302px;width:63px;height:25px;border-radius:9px 9px 0 0;text-align:center;line-height:26px">-22.</div>
<div class="f" style="left:1669px;top:326px;width:63px;height:25px;text-align:center;line-height:26px">2.9</div>
<div class="f" style="left:1669px;top:350px;width:63px;height:25px;border-radius:0 0 9px 9px;text-align:center;line-height:26px">67.</div>
<div class="f" style="left:1742px;top:302px;width:63px;height:25px;border-radius:9px 9px 0 0;text-align:center;line-height:26px">: 0°</div>
<div class="f" style="left:1742px;top:326px;width:63px;height:25px;text-align:center;line-height:26px">:0°</div>
<div class="f" style="left:1742px;top:350px;width:63px;height:25px;border-radius:0 0 9px 9px;text-align:center;line-height:26px">:0°</div>
<div class="f" style="left:1816px;top:302px;width:63px;height:25px;border-radius:9px 9px 0 0;text-align:center;line-height:26px">37.</div>
<div class="f" style="left:1816px;top:326px;width:63px;height:25px;text-align:center;line-height:26px">37.</div>
<div class="f" style="left:1816px;top:350px;width:63px;height:25px;border-radius:0 0 9px 9px;text-align:center;line-height:26px">37.</div>
<svg style="left:1669px;top:302px" width="212" height="74" fill="#7c7c7c"><path d="M5 10L10 5.5V14.5ZM52 5.5L57 10L52 14.5ZM5 34L10 29.5V38.5ZM52 29.5L57 34L52 38.5ZM5 58L10 53.5V62.5ZM52 53.5L57 58L52 62.5Z"/><path d="M78 10L83 5.5V14.5ZM125 5.5L130 10L125 14.5ZM78 34L83 29.5V38.5ZM125 29.5L130 34L125 38.5ZM78 58L83 53.5V62.5ZM125 53.5L130 58L125 62.5Z"/><path d="M152 10L157 5.5V14.5ZM199 5.5L204 10L199 14.5ZM152 34L157 29.5V38.5ZM199 29.5L204 34L199 38.5ZM152 58L157 53.5V62.5ZM199 53.5L204 58L199 62.5Z"/></svg>
<div class="t" style="left:1678px;top:388px">Rotation</div>
<div class="d" style="left:1745px;top:382px;width:134px;height:25px;padding-left:10px">XYZ Euler</div>
<svg style="left:1866px;top:385px" width="9" height="18"><use href="#ud"/></svg>
<div class="sep" style="left:1664px;top:417px;width:220px"></div>

<svg style="left:1674px;top:427px" width="9" height="10"><use href="#tr"/></svg>
<div class="h" style="left:1689px;top:423px">Delta Transform</div><div class="g" style="left:1863px;top:428px"></div>
<div class="sep" style="left:1664px;top:445px;width:220px"></div>
<svg style="left:1674px;top:456px" width="9" height="10"><use href="#tr"/></svg>
<div class="h" style="left:1689px;top:452px">Transform Locks</div><div class="g" style="left:1863px;top:457px"></div>
<div class="sep" style="left:1664px;top:474px;width:220px"></div>
<svg style="left:1674px;top:485px" width="9" height="10"><use href="#tr"/></svg>
<div class="h" style="left:1689px;top:481px">Relations</div><div class="g" style="left:1863px;top:486px"></div>
<div class="sep" style="left:1664px;top:503px;width:220px"></div>
<svg style="left:1674px;top:514px" width="9" height="10"><use href="#tr"/></svg>
<div class="h" style="left:1689px;top:510px">Relations Extras</div><div class="g" style="left:1863px;top:515px"></div>
<div class="sep" style="left:1664px;top:532px;width:220px"></div>
<svg style="left:1674px;top:542px" width="10" height="11"><use href="#td"/></svg>
<div class="h" style="left:1689px;top:539px">Groups</div><div class="g" style="left:1863px;top:544px"></div>
<div style="left:1669px;top:573px;width:185px;height:24px;border:1px solid #5a5a5a;border-radius:6px 0 0 6px;background:linear-gradient(#7f7f7f,#6d6d6d);text-align:center;line-height:25px;color:#4e4e4e">Add to Group</div>
<div style="left:1853px;top:573px;width:26px;height:24px;border:1px solid #5a5a5a;border-radius:0 6px 6px 0;background:linear-gradient(#7f7f7f,#6d6d6d)"></div>
<svg style="left:1858px;top:577px" width="16" height="16"><path d="M8 2V14M2 8H14" stroke="#9c9c9c" stroke-width="2.4"/></svg>
<div class="sep" style="left:1664px;top:607px;width:220px"></div>
<svg style="left:1674px;top:616px" width="10" height="11"><use href="#td"/></svg>
<div class="h" style="left:1689px;top:613px">Display</div><div class="g" style="left:1863px;top:618px"></div>

<div class="d" style="left:1673px;top:650px;width:17px;height:17px"></div>
<div class="d" style="left:1673px;top:677px;width:17px;height:17px"></div>
<div class="d" style="left:1673px;top:704px;width:17px;height:17px"></div>
<div class="d" style="left:1673px;top:731px;width:17px;height:17px"></div>
<div class="d" style="left:1783px;top:650px;width:17px;height:17px"></div>
<div class="d" style="left:1783px;top:677px;width:17px;height:17px"></div>
<div class="d" style="left:1783px;top:704px;width:17px;height:17px"></div>
<div class="d" style="left:1783px;top:731px;width:17px;height:17px"></div>
<div class="t" style="left:1699px;top:652px">Name</div>
<div class="t" style="left:1699px;top:679px">Axis</div>
<div class="t" style="left:1699px;top:706px">Wire</div>
<div class="t" style="left:1699px;top:733px">Draw All E</div>
<div class="t" style="left:1810px;top:652px">B</div>
<div class="t" style="left:1810px;top:679px">Texture S</div>
<div class="t" style="left:1810px;top:706px">X-Ray</div>
<div class="t" style="left:1810px;top:733px">Transpare</div>
<div style="left:1834px;top:647px;width:45px;height:24px;border:1px solid #555;border-radius:5px;background:linear-gradient(#6a6a6a,#5a5a5a);color:#aaa;padding-left:10px;line-height:25px">Bo</div>
<svg style="left:1867px;top:650px" width="9" height="18"><use href="#ud"/></svg>
<div class="t" style="left:1678px;top:764px">Maximum D…</div>
<div class="t" style="left:1789px;top:764px">Object Color:</div>
<div class="d" style="left:1669px;top:785px;width:100px;height:25px;padding-left:8px">Textured</div>
<svg style="left:1757px;top:788px" width="9" height="18"><use href="#ud"/></svg>
<div style="left:1779px;top:785px;width:100px;height:25px;background:#fff;border:1px solid #555;border-radius:6px"></div>
<div class="sep" style="left:1664px;top:820px;width:220px"></div>
<svg style="left:1674px;top:829px" width="10" height="11"><use href="#td"/></svg>
<div class="h" style="left:1689px;top:826px">Duplication</div><div class="g" style="left:1863px;top:831px"></div>
<div style="left:1669px;top:859px;width:42px;height:25px;background:linear-gradient(#6f9ddc,#4e7fc0);border:1px solid #3a3a3a;border-radius:6px 0 0 6px;color:#0a1a3a;text-align:center;line-height:26px">None</div>
<div class="d" style="left:1710px;top:859px;width:43px;height:25px;border-radius:0;text-align:center;line-height:26px">Fram</div>
<div class="d" style="left:1752px;top:859px;width:43px;height:25px;border-radius:0;text-align:center;line-height:26px">Verts</div>
<div class="d" style="left:1794px;top:859px;width:43px;height:25px;border-radius:0;text-align:center;line-height:26px">Faces</div>
<div class="d" style="left:1836px;top:859px;width:43px;height:25px;border-radius:0 6px 6px 0;text-align:center;line-height:26px">Group</div>
<div class="sep" style="left:1664px;top:893px;width:220px"></div>
<svg style="left:1674px;top:904px" width="9" height="10"><use href="#tr"/></svg>
<div class="h" style="left:1689px;top:900px">Motion Paths</div><div class="g" style="left:1863px;top:905px"></div>
<div class="sep" style="left:1664px;top:922px;width:220px"></div>
<svg style="left:1674px;top:933px" width="9" height="10"><use href="#tr"/></svg>
<div class="h" style="left:1689px;top:929px">Custom Properties</div><div class="g" style="left:1863px;top:934px"></div>
<svg style="left:1660px;top:1057px" width="14" height="14"><use href="#hc"/></svg>
<div style="left:8px;top:1071px;width:1904px;height:1px;background:#c9a560"></div>
<div style="left:8px;top:0;width:1px;height:1072px;background:#c9a560"></div>
<div style="left:1911px;top:0;width:1px;height:1072px;background:#b98a48"></div>
</body></html>
